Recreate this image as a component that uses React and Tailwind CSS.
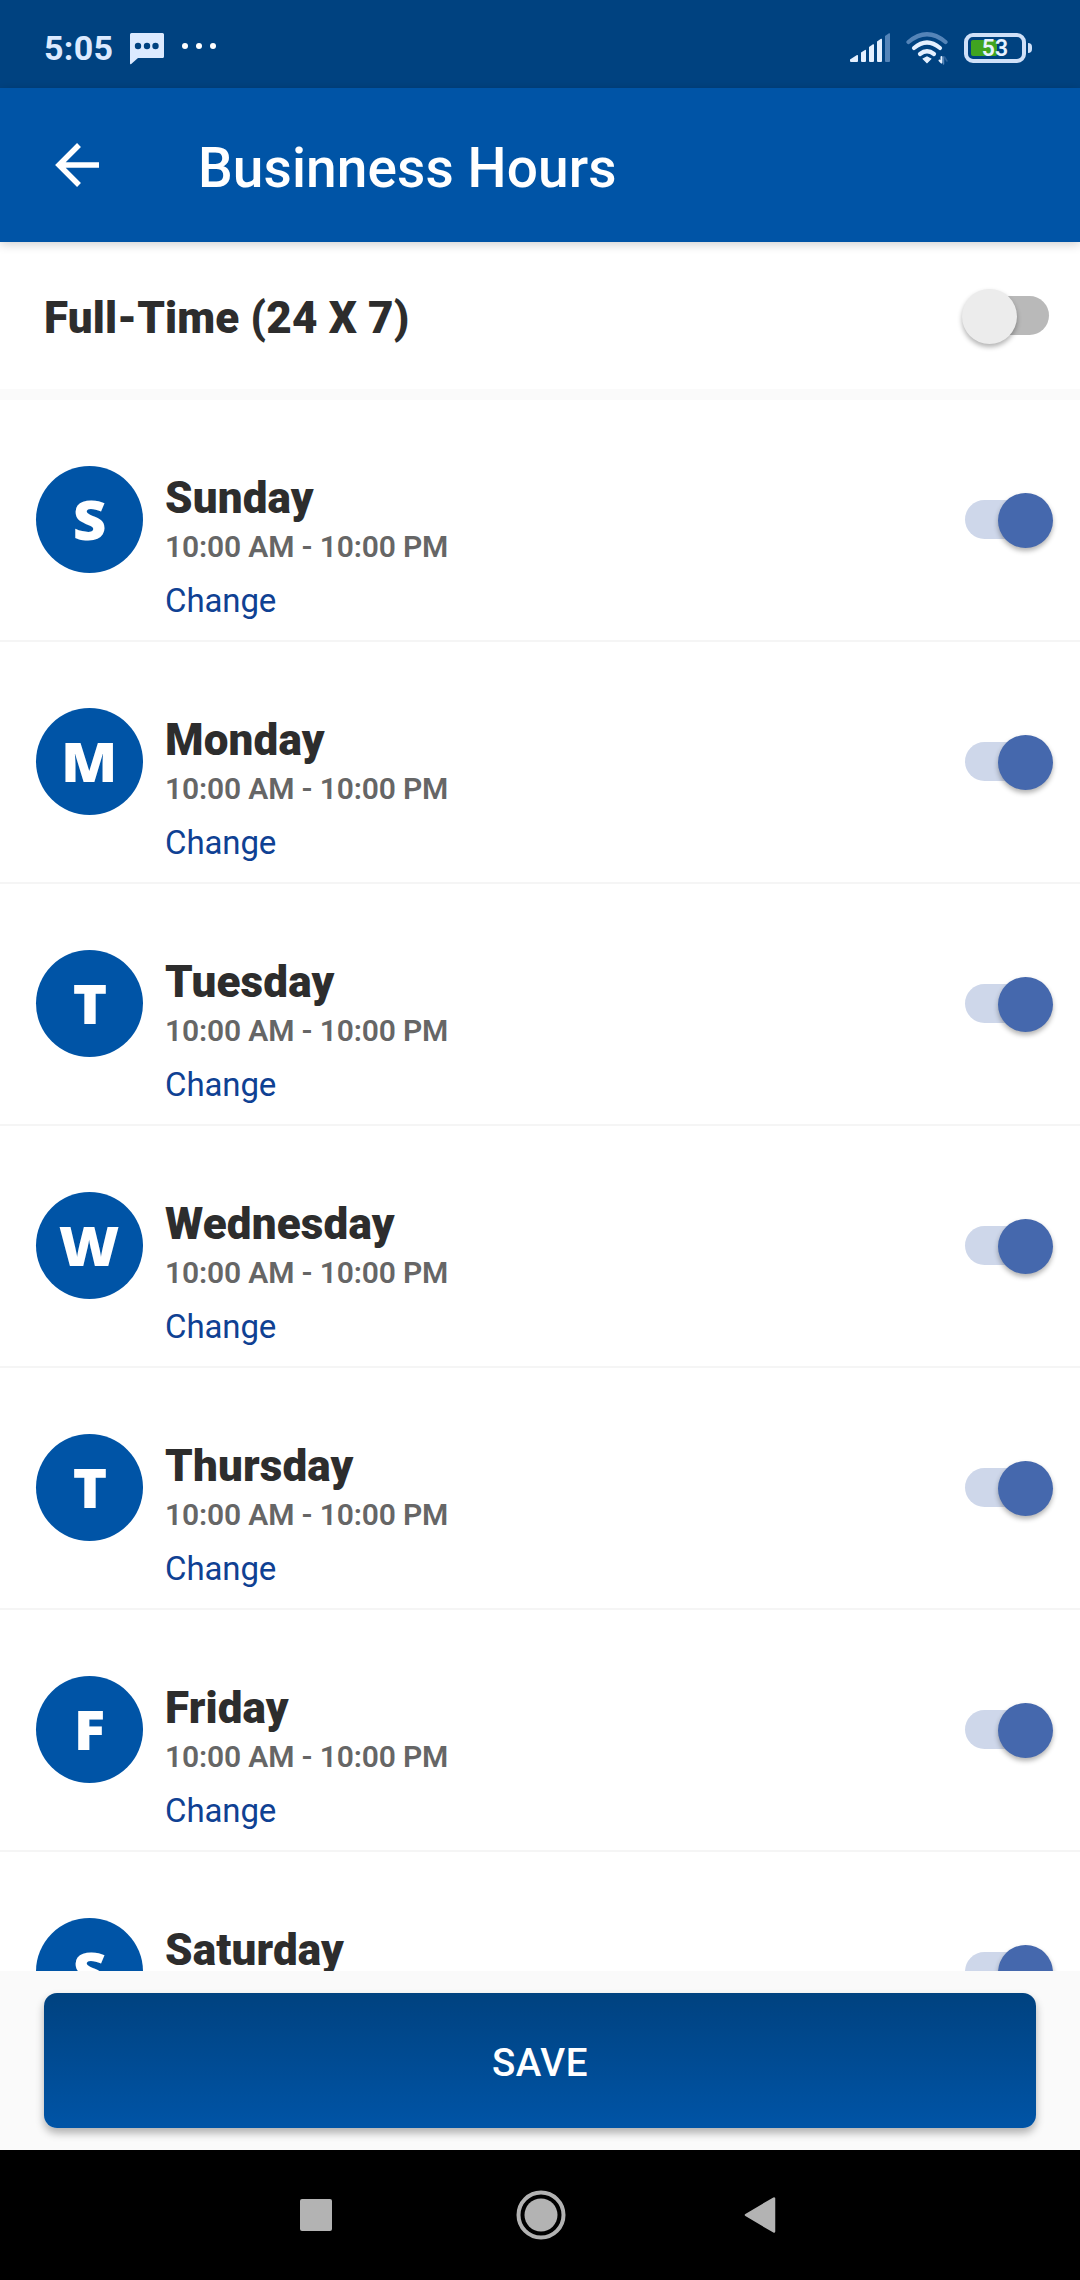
import { useState } from "react";

const initialDays = [
  "Sunday",
  "Monday",
  "Tuesday",
  "Wednesday",
  "Thursday",
  "Friday",
  "Saturday",
].map((name) => ({ name, open: "10:00 AM", close: "10:00 PM", enabled: true }));

function StatusBar() {
  return (
    <div className="flex h-[88px] shrink-0 items-center justify-between bg-[#004280] pl-11 pr-[48px] pt-[7px]">
      <div className="flex items-center">
        <span className="text-[34px] font-bold leading-none tracking-[0.3px] text-[#dceaff]">5:05</span>
        <svg className="ml-[17px] mt-[3px]" width="34" height="32" viewBox="0 0 34 32">
          <path d="M1.500 0h31a1.500 1.500 0 0 1 1.500 1.500v22a1.500 1.500 0 0 1-1.500 1.500H8L1.200 31Q0 32 0 30V1.500A1.500 1.500 0 0 1 1.500 0z" fill="#dceaff" />
          <circle cx="8" cy="13" r="3.200" fill="#004280" />
          <circle cx="17" cy="13" r="3.200" fill="#004280" />
          <circle cx="25.500" cy="13" r="3.200" fill="#004280" />
        </svg>
        <div className="mb-1 ml-[18px] flex gap-2">
          <span className="size-1.5 rounded-full bg-white" />
          <span className="size-1.5 rounded-full bg-white" />
          <span className="size-1.5 rounded-full bg-white" />
        </div>
      </div>
      <div className="flex items-center">
        <svg width="40" height="30" viewBox="0 0 40 30" fill="#e4f0ff">
          <path d="M0 26.500l7-4.500q1-.4 1 1v5q0 1-1 1H1q-1.500-.5-1-2.500z" />
          <path d="M11 19.500l4-2.500q1-.5 1 .8V28q0 1-1 1h-3q-1 0-1-1z" />
          <path d="M19 14l4-2.700q1-.5 1 .8V28q0 1-1 1h-3q-1 0-1-1z" />
          <path d="M27 8.500l4-2.700q1-.5 1 .8V28q0 1-1 1h-3q-1 0-1-1z" />
          <path d="M35 3l4-2.700q1-.5 1 .8V28q0 1-1 1h-3q-1 0-1-1z" fill="#5484b8" />
        </svg>
        <svg className="ml-4 mt-[3px]" width="44" height="34" viewBox="0 0 44 34" fill="none" strokeWidth="4.200" strokeLinecap="round">
          <path d="M2.500 10Q21 -5.500 39.500 10" stroke="#5484b8" />
          <path d="M8 16Q21 5 34 16" stroke="#e4f0ff" />
          <path d="M14 22Q21 16.500 28 22" stroke="#e4f0ff" />
          <path d="M17.500 27l3.500-2 3.500 2-3.500 3.500z" fill="#e4f0ff" stroke="#e4f0ff" strokeWidth="1.500" />
          <path d="M35.500 25v4.500M33.500 28.500l2 2" stroke="#e4f0ff" strokeWidth="2" />
          <path d="M37.500 25v7" stroke="#5484b8" strokeWidth="1.500" />
          <path d="M38.500 25l2.500 4" stroke="#2d6199" strokeWidth="1.500" />
        </svg>
        <div className="ml-[14px] flex items-center gap-[2px]">
          <div className="relative flex h-[30px] w-[62px] items-center justify-center rounded-[9px] border-4 border-[#cfe0f8]">
            <div className="absolute left-[3px] top-[3px] h-4 w-[26px] rounded-[2px] bg-[#40a420]" />
            <span className="relative pt-0.5 text-[23px] font-semibold leading-none text-[#e8f2ff]">53</span>
          </div>
          <div className="h-2.5 w-1 rounded-r-sm bg-[#cfe0f8]" />
        </div>
      </div>
    </div>
  );
}

function Header() {
  return (
    <header className="relative z-10 flex h-[154px] shrink-0 items-center bg-[#0054a6] pl-[54px] shadow-[0_2px_10px_rgba(0,0,0,0.2)]">
      <button aria-label="Back">
        <svg width="46" height="46" viewBox="0 0 46 46" fill="none" stroke="#fff" strokeWidth="5.500">
          <path d="M25 3L5 23l20 20M5 23h40" />
        </svg>
      </button>
      <h1 className="ml-[98px] mt-1.5 text-[55px] font-medium leading-none tracking-[0.1px] text-white">Businness Hours</h1>
    </header>
  );
}

function Toggle({ checked, onChange }) {
  return (
    <button
      role="switch"
      aria-checked={checked}
      onClick={onChange}
      className={`relative h-[39px] w-[84px] rounded-full ${checked ? "bg-[#ced7ea]" : "bg-[#b9b9b9]"}`}
    >
      <span
        className={`absolute -top-[7.5px] size-[55px] rounded-full shadow-[0_3px_5px_rgba(0,0,0,0.3)] ${
          checked ? "-right-[3.5px] bg-[#4568ad]" : "-left-[3.5px] bg-[#ececec]"
        }`}
      />
    </button>
  );
}

function DayRow({ day, onToggle }) {
  return (
    <li className="flex h-[242px] items-start border-b-2 border-[#f5f5f5] pl-9 pr-[31px] pt-[66px]">
      <div className="flex size-[107px] shrink-0 items-center justify-center rounded-full bg-[#0054a6] pb-0.5 font-['Open_Sans'] text-[54px] font-extrabold leading-none text-white">
        <span className="scale-x-108">{day.name[0]}</span>
      </div>
      <div className="ml-[22px] flex flex-1 flex-col items-start">
        <h2 className="mt-[9px] text-[44px] font-black leading-[46px] tracking-[0.15px] text-[#2d2d2d]">{day.name}</h2>
        <p className="mt-[8px] text-[30px] font-semibold leading-[36px] tracking-[-0.15px] text-[#666]">
          {day.open} - {day.close}
        </p>
        <button className="mt-[16px] text-[33px] leading-[40px] tracking-[-0.1px] text-[#0f4193]">Change</button>
      </div>
      <div className="mt-[34px] flex">
        <Toggle checked={day.enabled} onChange={onToggle} />
      </div>
    </li>
  );
}

function NavBar() {
  return (
    <nav className="flex h-[130px] shrink-0 items-center justify-between bg-black pl-[300px] pr-[304px]">
      <div className="size-8 rounded-[2px] bg-[#b3b3b3]" />
      <svg className="ml-[5px]" width="50" height="50" viewBox="0 0 50 50">
        <circle cx="25" cy="25" r="22.500" fill="none" stroke="#b3b3b3" strokeWidth="4" />
        <circle cx="25" cy="25" r="16.500" fill="#b3b3b3" />
      </svg>
      <svg width="32" height="38" viewBox="0 0 32 38">
        <path d="M2 19L30 2.500v33z" fill="#b3b3b3" stroke="#b3b3b3" strokeWidth="2.500" strokeLinejoin="round" />
      </svg>
    </nav>
  );
}

export default function App() {
  const [fullTime, setFullTime] = useState(false);
  const [days, setDays] = useState(initialDays);

  const toggleDay = (index) => {
    setDays(days.map((d, i) => (i === index ? { ...d, enabled: !d.enabled } : d)));
  };

  return (
    <div className="flex h-[2280px] w-[1080px] flex-col overflow-hidden bg-[#fafafa] font-[Roboto,sans-serif]">
      <StatusBar />
      <Header />
      <section className="flex h-[147px] shrink-0 items-center justify-between bg-white pl-11 pr-[31px]">
        <h2 className="mt-1 text-[44px] font-black leading-none tracking-[0.15px] text-[#2d2d2d]">Full-Time (24 X 7)</h2>
        <Toggle checked={fullTime} onChange={() => setFullTime(!fullTime)} />
      </section>
      <ul className="mt-[11px] h-[1571px] shrink-0 overflow-hidden bg-white">
        {days.map((day, i) => (
          <DayRow key={day.name} day={day} onToggle={() => toggleDay(i)} />
        ))}
      </ul>
      <div className="h-[179px] shrink-0 px-11 pt-[22px]">
        <button className="h-[135px] w-full rounded-[13px] bg-linear-to-b from-[#004280] to-[#0054a6] pt-1 text-[38.5px] font-medium tracking-[0.5px] text-white shadow-[0_5px_8px_rgba(0,0,0,0.3)]">
          SAVE
        </button>
      </div>
      <NavBar />
    </div>
  );
}
